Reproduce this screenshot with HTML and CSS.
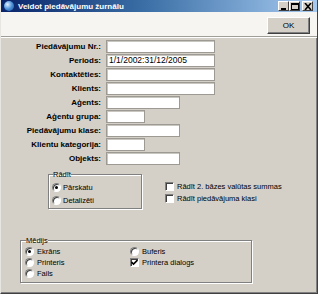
FILE: index.html
```html
<!DOCTYPE html>
<html lang="lv">
<head>
    <meta charset="UTF-8">
    <title>Veidot piedāvājumu žurnālu</title>
    <link rel="stylesheet" href="styles.css">
</head>
<body>
    <div class="window">
        <div class="titlebar">
            <span class="app-icon"></span>
            <span class="title">Veidot piedāvājumu žurnālu</span>
            <div class="caption-btns">
                <span class="cap-btn"><svg width="8" height="7" viewBox="0 0 8 7"><rect x="1" y="5" width="5" height="2" fill="#000"/></svg></span>
                <span class="cap-btn"><svg width="8" height="7" viewBox="0 0 8 7"><rect x="0.5" y="0.5" width="7" height="6" fill="none" stroke="#000"/><rect x="0" y="0" width="8" height="2" fill="#000"/></svg></span>
                <span class="cap-btn close"><svg width="8" height="7" viewBox="0 0 8 7"><path d="M1 0 L7 7 M7 0 L1 7" stroke="#000" stroke-width="1.6"/></svg></span>
            </div>
        </div>

        <div class="toolbar">
            <button class="btn-ok">OK</button>
        </div>

        <div class="content">
            <div class="form-grid">
                <label>Piedāvājumu Nr.:</label><span class="field long"></span>
                <label>Periods:</label><span class="field long">1/1/2002:31/12/2005</span>
                <label>Kontaktēties:</label><span class="field long"></span>
                <label>Klients:</label><span class="field long"></span>
                <label>Aģents:</label><span class="field medium"></span>
                <label>Aģentu grupa:</label><span class="field short"></span>
                <label>Piedāvājumu klase:</label><span class="field medium"></span>
                <label>Klientu kategorija:</label><span class="field short"></span>
                <label>Objekts:</label><span class="field medium"></span>
            </div>

            <div class="options">
                <fieldset class="group show-group">
                    <legend>Rādīt</legend>
                    <div class="opt"><span class="radio checked"></span>Pārskatu</div>
                    <div class="opt"><span class="radio"></span>Detalizēti</div>
                </fieldset>
                <div class="checks">
                    <div class="opt"><span class="check"></span>Rādīt 2. bāzes valūtas summas</div>
                    <div class="opt"><span class="check"></span>Rādīt piedāvājuma klasi</div>
                </div>
            </div>

            <fieldset class="group media-group">
                <legend>Mēdijs</legend>
                <div class="media-grid">
                    <div class="opt"><span class="radio checked"></span>Ekrāns</div>
                    <div class="opt"><span class="radio"></span>Buferis</div>
                    <div class="opt"><span class="radio"></span>Printeris</div>
                    <div class="opt"><span class="check checked"><svg width="7" height="7" viewBox="0 0 7 7"><path d="M0.5 3 L2.5 5 L6.5 1" fill="none" stroke="#000" stroke-width="1.6"/></svg></span>Printera dialogs</div>
                    <div class="opt"><span class="radio"></span>Fails</div>
                </div>
            </fieldset>
        </div>
    </div>
</body>
</html>
```

FILE: styles.css
```css
body {
    margin: 0;
    font-family: 'Liberation Sans', Arial, sans-serif;
    font-size: 7.5px;
    color: #000;
    background: #d4d0c8;
}
.window {
    width: 318px;
    height: 294px;
    box-sizing: border-box;
    background: #d4d0c8;
    border-left: 1px solid #e8e6e0;
    border-right: 1px solid #404040;
    border-bottom: 1px solid #404040;
    box-shadow: inset -1px -1px 0 #808080;
    display: flex;
    flex-direction: column;
}
.titlebar {
    height: 12px;
    display: flex;
    align-items: center;
    background: linear-gradient(to right, #0a246a, #3a6ea5 45%, #a6caf0);
    color: #fff;
    font-weight: bold;
    font-size: 8px;
}
.app-icon {
    width: 10px;
    height: 10px;
    margin: 0 4px 0 3px;
    border-radius: 50%;
    background: radial-gradient(circle at 35% 35%, #e0f0ff, #4a90d8 50%, #1c4f9a);
}
.title {
    flex: 1;
}
.caption-btns {
    display: flex;
    gap: 0;
    margin-right: 4px;
}
.cap-btn {
    width: 11px;
    height: 10px;
    box-sizing: border-box;
    background: #d4d0c8;
    border: 1px solid;
    border-color: #fff #404040 #404040 #fff;
    display: flex;
    align-items: center;
    justify-content: center;
}
.cap-btn.close {
    margin-left: 2px;
}
.toolbar {
    height: 25px;
    box-sizing: border-box;
    background: #f6f5f2;
    border-bottom: 1px solid #a09e98;
    display: flex;
    justify-content: flex-end;
    align-items: flex-start;
    padding: 5px 7px 0 0;
}
.btn-ok {
    width: 43px;
    height: 17px;
    padding: 0;
    font-family: 'Liberation Sans', Arial, sans-serif;
    font-size: 8px;
    color: #000;
    background: #d4d0c8;
    border: 1px solid;
    border-color: #fff #404040 #404040 #fff;
    box-shadow: inset -1px -1px 0 #808080;
}
.content {
    flex: 1;
    border-top: 1px solid #fff;
    padding-top: 2px;
}
.form-grid {
    display: grid;
    grid-template-columns: 100px auto;
    grid-auto-rows: 13px;
    row-gap: 1px;
    column-gap: 5px;
    align-items: center;
}
.form-grid label {
    text-align: right;
    font-weight: bold;
    font-size: 8px;
}
.field {
    height: 13px;
    box-sizing: border-box;
    background: #fff;
    border: 1px solid #9d9a93;
    box-shadow: inset 1px 1px 0 #c9c6bf;
    font-size: 8.5px;
    line-height: 11px;
    padding-left: 2px;
}
.field.long { width: 109px; }
.field.medium { width: 74px; }
.field.short { width: 39px; }

.group {
    margin: 0;
    border: 1px solid #808080;
    box-shadow: inset 1px 1px 0 #fff, 1px 1px 0 #fff;
    min-inline-size: 0;
}
.group legend {
    padding: 0;
    line-height: 9px;
    margin-left: 1px;
}
.options {
    display: flex;
    padding-left: 47px;
    margin-top: 5px;
}
.show-group {
    width: 94px;
    height: 39px;
    box-sizing: border-box;
    padding: 2px 0 0 3px;
}
.opt {
    display: flex;
    align-items: center;
    gap: 2px;
    height: 13px;
}
.radio {
    width: 9px;
    height: 9px;
    box-sizing: border-box;
    border-radius: 50%;
    background: #fff;
    border: 1px solid;
    border-color: #808080 #fff #fff #808080;
    box-shadow: inset 1px 1px 0 #404040;
    display: flex;
    align-items: center;
    justify-content: center;
}
.radio.checked::after {
    content: "";
    width: 3px;
    height: 3px;
    border-radius: 50%;
    background: #000;
}
.checks {
    margin-left: 23px;
    padding-top: 10px;
}
.checks .opt {
    height: 12px;
    gap: 3px;
}
.check {
    width: 9px;
    height: 9px;
    box-sizing: border-box;
    background: #fff;
    border: 1px solid;
    border-color: #808080 #fff #fff #808080;
    box-shadow: inset 1px 1px 0 #404040;
    display: flex;
    align-items: center;
    justify-content: center;
}
.media-group {
    width: 232px;
    height: 47px;
    box-sizing: border-box;
    margin: 27px 0 0 19px;
    padding: 1px 0 0 4px;
}
.media-grid {
    display: grid;
    grid-template-columns: 105px auto;
    grid-auto-rows: 11px;
}
.media-grid .opt {
    height: 11px;
    gap: 3px;
}
```
